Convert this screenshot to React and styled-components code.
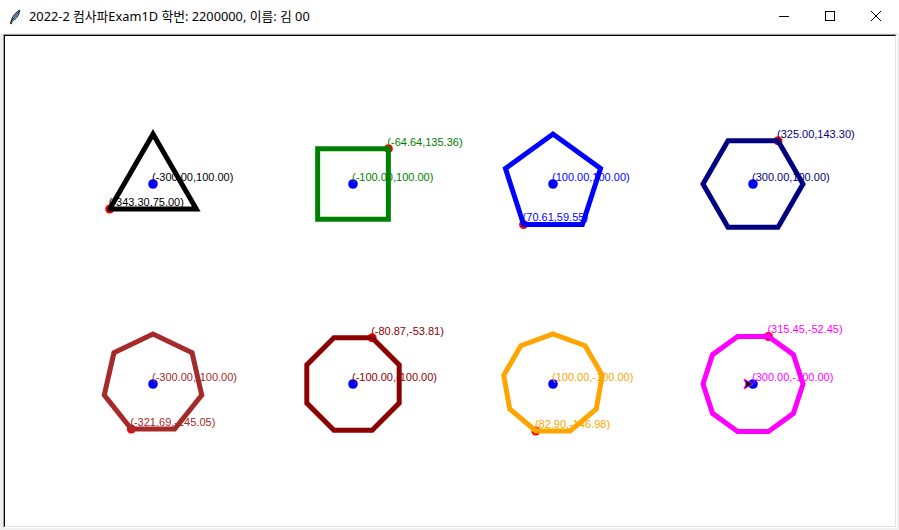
import React from 'react';
import styled, { createGlobalStyle } from 'styled-components';

const Global = createGlobalStyle`
html, body {
  margin: 0;
  padding: 0;
  background: #ffffff;
  overflow: hidden;
}
`;

const Window = styled.div`
  width: 899px;
  height: 530px;
  display: flex;
  flex-direction: column;
  background: #f0f0f0;
`;

const TitleBar = styled.div`
  height: 33px;
  display: flex;
  align-items: center;
  background: #ffffff;
`;

const TitleIcon = styled.div`
  width: 29px;
  height: 31px;
  display: flex;
  align-items: center;
  justify-content: center;
`;

const TitleText = styled.div`
  flex: 1;
  font-family: "Noto Sans", "Noto Sans CJK KR", sans-serif;
  font-size: 12.8px;
  color: #000000;
  white-space: nowrap;
  padding-bottom: 3px;
`;

const Controls = styled.div`
  display: flex;
  height: 33px;
`;

const ControlButton = styled.div`
  width: 46px;
  height: 31px;
  display: flex;
  align-items: center;
  justify-content: center;
`;

const Body = styled.div`
  flex: 1;
  padding: 1px 2px 2px 3px;
  display: flex;
`;

const CanvasOuter = styled.div`
  flex: 1;
  display: flex;
  border-top: 1px solid #a0a0a0;
  border-left: 1px solid #a0a0a0;
  border-right: 1px solid #ffffff;
  border-bottom: 1px solid #ffffff;
`;

const CanvasInner = styled.div`
  flex: 1;
  display: flex;
  background: #ffffff;
  border-top: 1px solid #000000;
  border-left: 1px solid #000000;
  border-right: 1px solid #e3e3e3;
  border-bottom: 1px solid #e3e3e3;
`;

const Label = styled.text`
  font-family: "Liberation Sans", Arial, sans-serif;
  font-size: 11px;
`;

const shapes = [
  { cx: -300, cy: 100, n: 3, start: 210, color: '#000000' },
  { cx: -100, cy: 100, n: 4, start: 45, color: '#008000' },
  { cx: 100, cy: 100, n: 5, start: 234, color: '#0000ff' },
  { cx: 300, cy: 100, n: 6, start: 60, color: '#000080' },
  { cx: -300, cy: -100, n: 7, start: 90 + 3 * 360 / 7, color: '#a52a2a' },
  { cx: -100, cy: -100, n: 8, start: 67.5, color: '#8b0000' },
  { cx: 100, cy: -100, n: 9, start: 250, color: '#ffa500' },
  { cx: 300, cy: -100, n: 10, start: 72, color: '#ff00ff' },
];

// turtle coords -> page pixels
const px = x => 453 + x;
const py = y => 284 - y;
const fmt = (x, y) => `(${x.toFixed(2)},${y.toFixed(2)})`;

const Shape = ({ cx, cy, n, start, color }) => {
  const pts = [];
  for (let i = 0; i <= n; i++) {
    const a = (start + (360 / n) * i) * Math.PI / 180;
    pts.push([cx + 50 * Math.cos(a), cy + 50 * Math.sin(a)]);
  }
  const [sx, sy] = pts[0];
  return (
    <g>
      <circle cx={px(cx)} cy={py(cy)} r="4.8" fill="#0000ff" />
      <Label x={px(cx) - 1} y={py(cy) - 3} fill={color}>{fmt(cx, cy)}</Label>
      <circle cx={px(sx)} cy={py(sy)} r="4.5" fill="#ff0000" />
      <Label x={px(sx) - 1} y={py(sy) - 3} fill={color}>{fmt(sx, sy)}</Label>
      <polyline
        points={pts.map(([x, y]) => `${px(x)},${py(y)}`).join(' ')}
        fill="none"
        stroke={color}
        strokeWidth="5"
        strokeLinejoin="miter"
        strokeLinecap="round"
      />
    </g>
  );
};

const App = () => {
  return (
    <Window>
      <Global />
      <TitleBar>
        <TitleIcon>
          <svg width="16" height="16" viewBox="0 0 16 16">
            <path d="M12.8 1.2 C9 2.8 6 6.5 4.6 10.5 L3.4 14.6 L4.4 14.8 L5.4 11.6 C9.2 10.4 11.8 6.8 12.8 1.2 Z" fill="#7fa6e0" stroke="#1a1a1a" strokeWidth="1" />
            <path d="M11.6 3 L5 11.4" stroke="#1a1a1a" strokeWidth="0.8" />
          </svg>
        </TitleIcon>
        <TitleText>2022-2 컴사파Exam1D 학번: 2200000, 이름: 김 00</TitleText>
        <Controls>
          <ControlButton>
            <svg width="10" height="10" viewBox="0 0 10 10">
              <path d="M0 5.5 H10" stroke="#000" strokeWidth="1" />
            </svg>
          </ControlButton>
          <ControlButton>
            <svg width="10" height="10" viewBox="0 0 10 10">
              <rect x="0.5" y="0.5" width="9" height="9" fill="none" stroke="#000" strokeWidth="1" />
            </svg>
          </ControlButton>
          <ControlButton>
            <svg width="10" height="10" viewBox="0 0 10 10">
              <path d="M0 0 L10 10 M10 0 L0 10" stroke="#000" strokeWidth="1" />
            </svg>
          </ControlButton>
        </Controls>
      </TitleBar>
      <Body>
        <CanvasOuter>
          <CanvasInner>
            <svg width="890" height="490" viewBox="5 36 890 490">
              {shapes.map((s, i) => <Shape key={i} {...s} />)}
              <polygon points="753,384 744,379 746,384 744,389" fill="#000000" stroke="#ff00ff" strokeWidth="1" />
            </svg>
          </CanvasInner>
        </CanvasOuter>
      </Body>
    </Window>
  );
};

export default App;
